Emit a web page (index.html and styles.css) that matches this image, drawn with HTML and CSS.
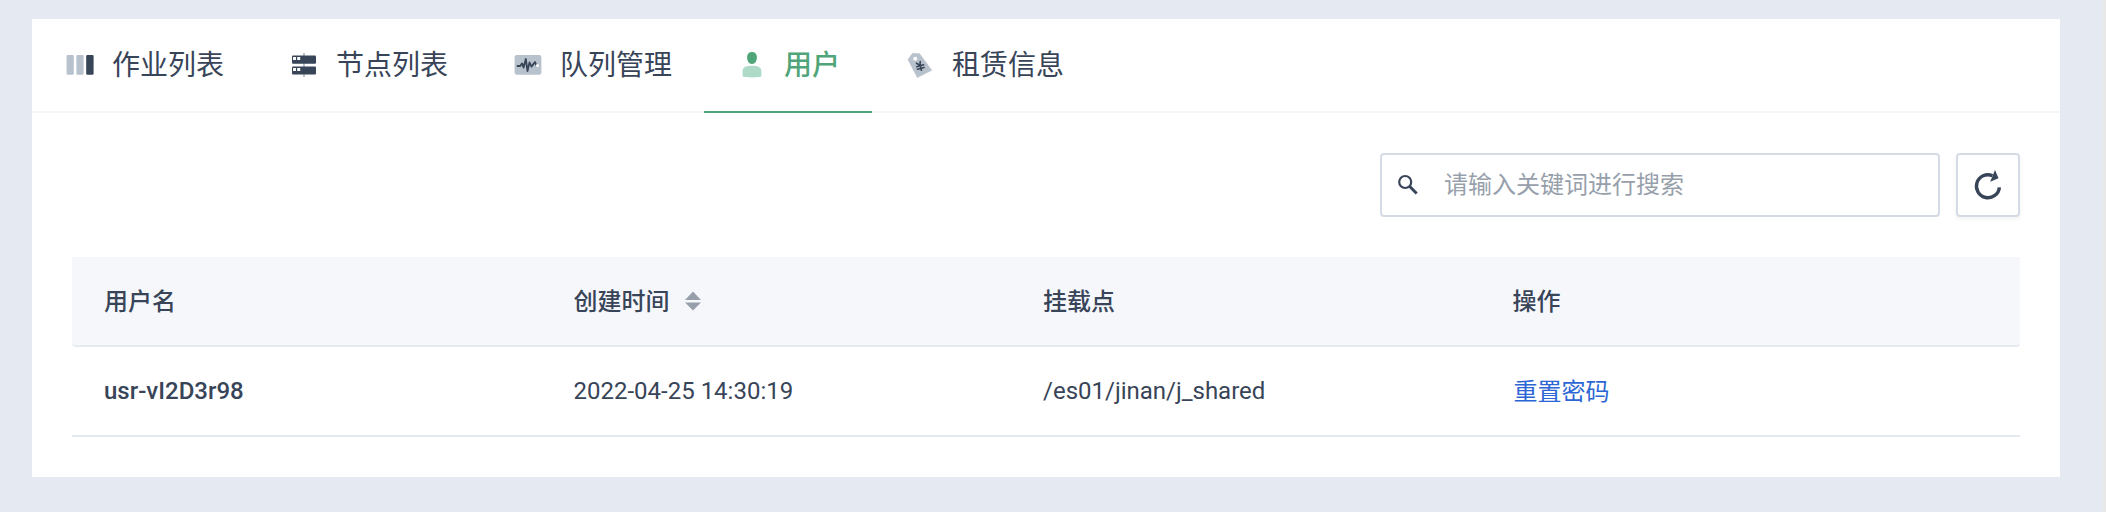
FILE: index.html
```html
<!DOCTYPE html>
<html lang="zh-CN">
<head>
<meta charset="utf-8">
<title>用户</title>
<link rel="stylesheet" href="styles.css">
</head>
<body>
<main class="card">
  <nav class="tabs">
    <a class="tab">
      <svg class="tab-icon" viewBox="0 0 32 32"><rect x="2.6" y="7.1" width="7.2" height="19.6" rx="1.2" fill="#b8c2cc"/><rect x="12.4" y="7.1" width="7.2" height="19.6" rx="1.2" fill="#b8c2cc"/><rect x="22.2" y="7.1" width="7.400" height="19.6" rx="1.2" fill="#384458"/></svg>
      <span class="tab-text">作业列表</span>
    </a>
    <a class="tab">
      <svg class="tab-icon" viewBox="0 0 32 32"><path d="M15 5h2v24h-2z" fill="#b8c2cc"/><rect x="4" y="7.6" width="24" height="8.2" rx="1" fill="#384458"/><rect x="4" y="18.4" width="24" height="8.2" rx="1" fill="#384458"/><path d="M5 9h3v3H5zM9.2 9h3v3h-3zM5 20h3v3H5zM9.2 20h3v3h-3z" fill="#fff"/></svg>
      <span class="tab-text">节点列表</span>
    </a>
    <a class="tab">
      <svg class="tab-icon" viewBox="0 0 32 32"><rect x="2.6" y="7.1" width="26.8" height="19.6" rx="2" fill="#b8c2cc"/><path d="M5.5 18h2.7l1.9-2.6 1.500 4.200 2.200-8.600 1.700 12 2-8.600 2 4.200 1.700-2.200L23 14l1.500 3.700" fill="none" stroke="#384458" stroke-width="1.8" stroke-linejoin="round" stroke-linecap="round"/><circle cx="25.400" cy="17.600" r="1.500" fill="#fff"/></svg>
      <span class="tab-text">队列管理</span>
    </a>
    <a class="tab tab-active">
      <svg class="tab-icon" viewBox="0 0 32 32"><path d="M16 3.900c3.200 0 4.900 2 4.900 5.200 0 4-1.700 7-4.900 7s-4.900-3-4.900-7c0-3.200 1.700-5.200 4.900-5.200z" fill="#4fa578"/><path d="M6.600 28v-4.500c0-4 3-5.700 9.400-5.700s9.400 1.700 9.400 5.700V28c0 .5-1.500 1.400-9.400 1.400s-9.400-.9-9.400-1.400z" fill="#addbc7"/></svg>
      <span class="tab-text">用户</span>
    </a>
    <a class="tab">
      <svg class="tab-icon" viewBox="0 0 32 32"><path fill-rule="evenodd" d="M8.600 5.200 15.600 5.700 27.700 22.300 13.300 29.600 4 11.600zM11.200 8.500a2.200 2.200 0 1 0 0 4.400 2.200 2.200 0 0 0 0-4.400z" fill="#b8c2cc" stroke="#b8c2cc" stroke-width=".6" stroke-linejoin="round"/><path d="M12.500 15.200l3.500 2.200.2-3.900M16 17.400l1.400 4.800M12.800 18.700l6.800-1.900M13.500 21.300l6.500-1.900" fill="none" stroke="#384458" stroke-width="1.600" stroke-linecap="round"/></svg>
      <span class="tab-text">租赁信息</span>
    </a>
  </nav>
  <section class="content">
    <div class="toolbar">
      <label class="search">
        <svg class="search-icon" viewBox="0 0 24 24"><circle cx="9.200" cy="9" r="6" fill="none" stroke="#384458" stroke-width="2.200"/><path d="M13.500 13.300l7.200 7.200" stroke="#384458" stroke-width="3"/></svg>
        <input class="search-input" type="text" placeholder="请输入关键词进行搜索">
      </label>
      <button class="refresh" type="button" aria-label="刷新">
        <svg class="refresh-icon" viewBox="0 0 32 32"><path d="M27.400 18.300A11.500 11.500 0 1 1 20.500 6.700" fill="none" stroke="#384458" stroke-width="3.400"/><path d="M23 .9l3.500 8.400-8.300 3.500z" fill="#384458"/></svg>
      </button>
    </div>
    <table class="table">
      <thead>
        <tr>
          <th class="col">用户名</th>
          <th class="col"><span class="sortable">创建时间<svg class="sort-icon" viewBox="0 0 16 20"><path d="M8 .5 16 9H0zM0 11.500h16L8 19.500z" fill="#979fab"/></svg></span></th>
          <th class="col">挂载点</th>
          <th>操作</th>
        </tr>
      </thead>
      <tbody>
        <tr>
          <td class="name">usr-vI2D3r98</td>
          <td>2022-04-25 14:30:19</td>
          <td>/es01/jinan/j_shared</td>
          <td class="actions"><a class="link">重置密码</a></td>
        </tr>
      </tbody>
    </table>
  </section>
</main>
</body>
</html>
```
FILE: styles.css
```css
* {
  box-sizing: border-box;
}

body {
  margin: 0;
  height: 512px;
  padding: 19px 43px 35px 32px;
  overflow: hidden;
  background: #e5e9f2;
  border-right: 3px solid #e8e8e8;
  color: #384458;
  font-family: Roboto, "Noto Sans CJK SC", sans-serif;
  font-size: 24px;
}

.card {
  height: 458px;
  background: #fff;
}

.tabs {
  display: flex;
  height: 94px;
  box-shadow: inset 0 -2px #f5f7fa;
}

.tab {
  display: flex;
  align-items: center;
  gap: 16px;
  padding: 0 32px 4px;
  font-size: 28px;
  line-height: 40px;
  white-space: nowrap;
}

.tab-icon {
  width: 32px;
  height: 32px;
}

.tab-text {
  padding-top: 4px;
}

.tab-active {
  color: #4fa578;
  font-weight: 500;
  box-shadow: inset 0 -2px #4fa578;
}

.content {
  padding: 40px;
}

.toolbar {
  display: flex;
  justify-content: flex-end;
  gap: 16px;
  margin-bottom: 40px;
}

.search {
  display: flex;
  align-items: center;
  gap: 24px;
  width: 560px;
  height: 64px;
  padding: 0 14px;
  border: 2px solid #d4dbe5;
  border-radius: 4px;
}

.search-icon {
  width: 24px;
  height: 24px;
}

.search-input {
  flex: 1;
  padding: 0;
  border: 0;
  outline: 0;
  background: transparent;
  color: inherit;
  font: inherit;
}

.search-input::placeholder {
  color: #979fab;
}

.refresh {
  display: flex;
  align-items: center;
  justify-content: center;
  width: 64px;
  height: 64px;
  padding: 0;
  border: 2px solid #d4dbe5;
  border-radius: 4px;
  background: #fff;
  box-shadow: 0 2px 4px rgba(7, 30, 60, 0.06);
}

.refresh-icon {
  width: 32px;
  height: 32px;
}

.table {
  width: 100%;
  border-collapse: separate;
  border-spacing: 0;
  table-layout: fixed;
}

.table th,
.table td {
  height: 90px;
  padding: 0 32px;
  border-bottom: 2px solid #e5e9f0;
  text-align: left;
  font-weight: 400;
}

.table th {
  padding-bottom: 4px;
  background: #f5f7fb;
  font-weight: 500;
}

.table th:first-child {
  border-bottom-left-radius: 4px;
}

.table th:last-child {
  border-bottom-right-radius: 4px;
}

.table .col {
  width: 469.5px;
}

.table .name {
  font-weight: 500;
}

.table .actions {
  padding-bottom: 4px;
}

.sortable {
  display: flex;
  align-items: center;
  gap: 15px;
}

.sort-icon {
  width: 16px;
  height: 20px;
  margin-top: 4px;
}

.link {
  padding-left: 1px;
  color: #2c66d4;
}
```
